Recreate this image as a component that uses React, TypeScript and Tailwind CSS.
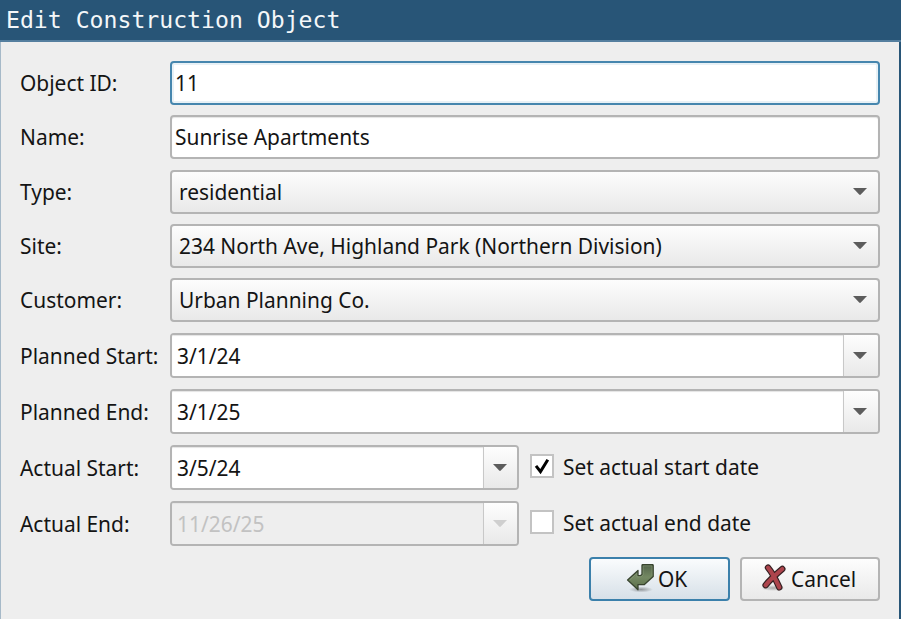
import type { ReactNode } from "react";

const frame = "rounded-[4px] border-2 border-[#b4b4b4]";
const raised = "bg-linear-to-b from-[#fdfdfd] to-[#e9e9e9]";

function Row({ label, className, children }: { label: string; className: string; children: ReactNode }) {
  return (
    <div className={`flex items-center ${className}`}>
      <label className="w-[150px] shrink-0">{label}</label>
      {children}
    </div>
  );
}

function Arrow({ muted = false }: { muted?: boolean }) {
  return (
    <svg width="14" height="7" viewBox="0 0 14 7" className={muted ? "text-[#cfcfcf]" : "text-[#5c5c5c]"}>
      <path d="M0 0H14L7.8 6.6Q7 7.2 6.2 6.6Z" fill="currentColor" />
    </svg>
  );
}

function Combo({ value }: { value: string }) {
  return (
    <div className={`flex h-11 flex-1 items-center justify-between pr-[11px] pl-[7px] ${frame} ${raised}`}>
      <span>{value}</span>
      <div className="pb-px">
        <Arrow />
      </div>
    </div>
  );
}

function DateField({
  value,
  muted = false,
  className = "flex-1",
  buttonClass = "w-[35px]",
}: {
  value: string;
  muted?: boolean;
  className?: string;
  buttonClass?: string;
}) {
  return (
    <div className={`flex h-[45px] overflow-hidden ${frame} ${className}`}>
      <div
        className={`flex flex-1 items-center pt-px pl-[5px] shadow-[inset_0_1px_1px_#e4e4e4] ${muted ? "bg-[#eeeeee] text-[#c2c2c2]" : "bg-white"}`}
      >
        {value}
      </div>
      <div className={`flex items-center justify-center border-l border-[#c8c8c8] pr-[2px] pb-px ${buttonClass} ${raised}`}>
        <Arrow muted={muted} />
      </div>
    </div>
  );
}

function Check({ label, checked = false }: { label: string; checked?: boolean }) {
  return (
    <div className="mb-[3px] ml-[11px] flex items-center">
      <span className="mr-[9px] flex size-6 items-center justify-center border-2 border-[#c3c3c3] bg-white">
        {checked && (
          <svg width="18" height="18" viewBox="0 0 18 18" fill="none">
            <path d="M3 8.8L7.5 14.6L14.8 2.8" stroke="#000" strokeWidth="3" />
          </svg>
        )}
      </span>
      <span className="pt-[2px]">{label}</span>
    </div>
  );
}

function OkIcon() {
  return (
    <svg width="30" height="30" viewBox="0 0 30 30" className="shrink-0">
      <defs>
        <linearGradient id="okFill" x1="0" y1="0" x2="0" y2="1">
          <stop offset="0" stopColor="#52634a" />
          <stop offset=".5" stopColor="#748963" />
          <stop offset="1" stopColor="#596d48" />
        </linearGradient>
        <radialGradient id="okShade">
          <stop offset="0" stopColor="#000" stopOpacity=".35" />
          <stop offset="1" stopColor="#000" stopOpacity="0" />
        </radialGradient>
      </defs>
      <ellipse cx="15" cy="25.5" rx="12" ry="3" fill="url(#okShade)" />
      <path
        d="M16 1.4Q16 .6 17 .6H26.4Q27.2 .6 27.2 1.4V12.6L18.4 20.6H12V25.8L1.6 16L12 6.4V11.6H14.6L16 10.4Z"
        fill="url(#okFill)"
        stroke="#38442f"
        strokeWidth="1.3"
        strokeLinejoin="round"
      />
      <path d="M17.1 1.9H26V11.8M17.1 1.9V11L15 12.8H10.8V9.4L3.6 16" fill="none" stroke="#94a884" strokeWidth=".8" opacity=".55" />
    </svg>
  );
}

function CancelIcon() {
  const cross = "M7 3.6C9.5 6.5 15 16 18.3 23.4M21.3 5C16 9.5 9 15.5 4.6 21.2";
  return (
    <svg width="28" height="30" viewBox="0 0 28 30" className="shrink-0" fill="none" strokeLinecap="round">
      <defs>
        <radialGradient id="cancelShade">
          <stop offset="0" stopColor="#000" stopOpacity=".3" />
          <stop offset="1" stopColor="#000" stopOpacity="0" />
        </radialGradient>
      </defs>
      <ellipse cx="12" cy="24" rx="12" ry="3" fill="url(#cancelShade)" />
      <path d={cross} stroke="#352022" strokeWidth="6.4" />
      <path d={cross} stroke="#ad444c" strokeWidth="4.1" />
    </svg>
  );
}

export default function App() {
  return (
    <div className="flex h-[619px] w-[901px] flex-col overflow-hidden bg-[#eeeeee] font-['Noto_Sans',sans-serif] text-[20.93px] leading-7 text-[#141414]">
      <header className="h-[42px] shrink-0 border-b-2 border-[#557f9f] bg-[#285577] pt-[5px] pl-[6px] font-['DejaVu_Sans_Mono',monospace] text-[23.15px] leading-[30px] whitespace-pre text-[#f4f7f9]">
        Edit Construction Object
      </header>
      <main className="flex-1 border-r-2 border-l border-r-[#285577] border-l-[#a6b9c8] pt-[19px] pr-[19px] pl-[19px]">
        <Row label="Object ID:" className="h-11">
          <div className="flex h-11 flex-1 items-center rounded-[4px] border-2 border-[#4686ae] bg-white pl-[3px] shadow-[inset_0_0_0_2px_#e8f1f6]">11</div>
        </Row>
        <Row label="Name:" className="mt-[10px] h-11">
          <div className={`flex h-11 flex-1 items-center bg-white pl-[3px] shadow-[inset_0_1px_1px_#e4e4e4] ${frame}`}>Sunrise Apartments</div>
        </Row>
        <Row label="Type:" className="mt-[11px] h-11">
          <Combo value="residential" />
        </Row>
        <Row label="Site:" className="mt-[10px] h-11">
          <Combo value="234 North Ave, Highland Park (Northern Division)" />
        </Row>
        <Row label="Customer:" className="mt-[10px] h-11">
          <Combo value="Urban Planning Co." />
        </Row>
        <Row label="Planned Start:" className="mt-[11px] h-[45px]">
          <DateField value="3/1/24" />
        </Row>
        <Row label="Planned End:" className="mt-[11px] h-[45px]">
          <DateField value="3/1/25" />
        </Row>
        <Row label="Actual Start:" className="mt-[11px] h-[45px]">
          <DateField value="3/5/24" className="w-[349px]" buttonClass="w-[34px]" />
          <Check label="Set actual start date" checked />
        </Row>
        <Row label="Actual End:" className="mt-[11px] h-[45px]">
          <DateField value="11/26/25" className="w-[349px]" buttonClass="w-[34px]" muted />
          <Check label="Set actual end date" />
        </Row>
        <div className="mt-[11px] flex justify-end gap-[10px]">
          <button className="flex h-11 w-[141px] items-center rounded-[4px] border-2 border-[#3b80ab] bg-linear-to-b from-[#fafcfd] to-[#d7e0e8] pl-[35px]">
            <OkIcon />
            <span className="ml-[2px]">OK</span>
          </button>
          <button className={`flex h-11 w-[140px] items-center pl-[19px] ${frame} ${raised}`}>
            <CancelIcon />
            <span className="ml-[2px]">Cancel</span>
          </button>
        </div>
      </main>
    </div>
  );
}
